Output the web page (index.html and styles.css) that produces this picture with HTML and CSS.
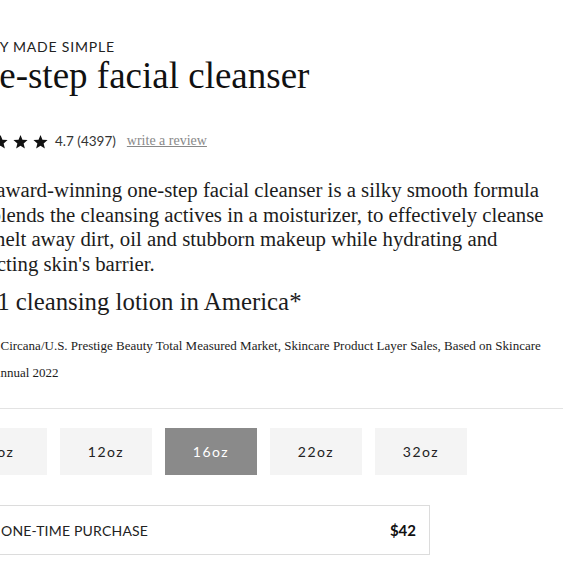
FILE: index.html
```html
<!DOCTYPE html>
<html lang="en">
<head>
<meta charset="utf-8">
<title>One-step facial cleanser</title>
<link rel="stylesheet" href="styles.css">
</head>
<body>
<main class="product">
  <p class="eyebrow">PURITY MADE SIMPLE</p>
  <h1 class="title">One-step facial cleanser</h1>
  <div class="rating">
    <span class="stars">
      <svg viewBox="0 0 24 24"><path d="M12 1.5l3.1 7.6 8.2.6-6.3 5.3 2 8-7-4.4-7 4.4 2-8L.7 9.7l8.2-.6z"/></svg>
      <svg viewBox="0 0 24 24"><path d="M12 1.5l3.1 7.6 8.2.6-6.3 5.3 2 8-7-4.4-7 4.4 2-8L.7 9.7l8.2-.6z"/></svg>
      <svg viewBox="0 0 24 24"><path d="M12 1.5l3.1 7.6 8.2.6-6.3 5.3 2 8-7-4.4-7 4.4 2-8L.7 9.7l8.2-.6z"/></svg>
      <svg viewBox="0 0 24 24"><path d="M12 1.5l3.1 7.6 8.2.6-6.3 5.3 2 8-7-4.4-7 4.4 2-8L.7 9.7l8.2-.6z"/></svg>
      <svg viewBox="0 0 24 24"><path d="M12 1.5l3.1 7.6 8.2.6-6.3 5.3 2 8-7-4.4-7 4.4 2-8L.7 9.7l8.2-.6z"/></svg>
    </span>
    <span class="score">4.7 (4397)</span>
    <a class="review-link" href="#">write a review</a>
  </div>
  <p class="desc">This award-winning one-step facial cleanser is a silky smooth formula that blends the cleansing actives in a moisturizer, to effectively cleanse and melt away dirt, oil and stubborn makeup while hydrating and protecting skin's barrier.</p>
  <p class="claim">The #1 cleansing lotion in America*</p>
  <p class="source">*Source: Circana/U.S. Prestige Beauty Total Measured Market, Skincare Product Layer Sales, Based on Skincare Annual 2022</p>
  <hr class="divider">
  <div class="sizes">
    <button class="size">8oz</button>
    <button class="size">12oz</button>
    <button class="size size-active">16oz</button>
    <button class="size">22oz</button>
    <button class="size">32oz</button>
  </div>
  <div class="option">
    <span class="radio"></span>
    <span class="option-label">ONE-TIME PURCHASE</span>
    <span class="option-price">$42</span>
  </div>
</main>
</body>
</html>
```
FILE: styles.css
```css
html, body {
  margin: 0;
  padding: 0;
  background: #fff;
  overflow: hidden;
}
body {
  color: #1c1c1c;
  font-family: "Liberation Serif", "DejaVu Serif", serif;
}
.product {
  margin-left: -49px;
  width: 612px;
  padding-top: 38px;
}
.eyebrow {
  margin: 0 0 0 5px;
  font-family: "Lato", "Liberation Sans", sans-serif;
  font-size: 14px;
  letter-spacing: 0.8px;
  line-height: 18px;
  color: #222;
}
.title {
  margin: 0 0 0 3px;
  font-weight: normal;
  font-size: 37px;
  line-height: 40px;
  color: #111;
}
.rating {
  display: flex;
  align-items: center;
  margin-top: 33px;
  height: 24px;
}
.stars {
  display: flex;
  gap: 5px;
  margin-left: 2px;
}
.stars svg {
  width: 15px;
  height: 15px;
  fill: #111;
}
.score {
  margin-left: 7px;
  font-family: "Lato", "Liberation Sans", sans-serif;
  font-size: 13.5px;
  color: #333;
}
.review-link {
  margin-left: 11px;
  font-size: 14px;
  color: #888;
  text-decoration: underline;
}
.desc {
  margin: 25px 0 0 3px;
  width: 610px;
  font-size: 20.8px;
  line-height: 24.5px;
}
.claim {
  margin: 12px 0 0 -11px;
  font-size: 24.8px;
  line-height: 28px;
}
.source {
  margin: 16px 0 0;
  padding-left: 40px;
  text-indent: -40px;
  width: 569px;
  font-size: 13px;
  line-height: 27px;
}
.divider {
  margin: 22px 0 0;
  border: 0;
  border-top: 1px solid #e3e3e3;
}
.sizes {
  display: flex;
  gap: 13px;
  margin: 19px 0 0 4px;
}
.size {
  width: 92px;
  height: 47px;
  border: 0;
  background: #f4f4f4;
  font-family: "Lato", "Liberation Sans", sans-serif;
  font-size: 14px;
  letter-spacing: 1.5px;
  color: #222;
  padding: 0;
}
.size-active {
  background: #8a8a8a;
  color: #fff;
}
.option {
  display: flex;
  align-items: center;
  margin-top: 30px;
  width: 479px;
  height: 50px;
  box-sizing: border-box;
  border: 1px solid #dcdcdc;
  padding: 0 13px 0 16px;
  font-family: "Lato", "Liberation Sans", sans-serif;
}
.radio {
  width: 16px;
  height: 16px;
  border: 1px solid #999;
  border-radius: 50%;
  box-sizing: border-box;
  margin-right: 17px;
}
.option-label {
  flex: 1;
  font-size: 14px;
  letter-spacing: 0.2px;
  color: #222;
}
.option-price {
  font-size: 15px;
  font-weight: bold;
  color: #111;
}
```
